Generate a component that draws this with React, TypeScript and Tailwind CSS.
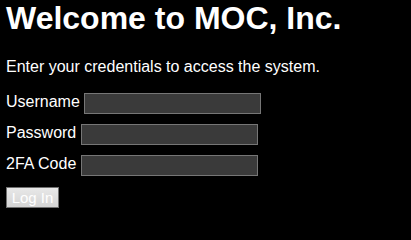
import React from 'react';

const fields = ['Username', 'Password', '2FA Code'];

export default function App() {
  return (
    <div className="min-h-screen bg-black px-[6px] text-white font-['Liberation_Sans',Arial,sans-serif]">
      <h1 className="mb-[21px] text-[32px] font-bold leading-[37px]">Welcome to MOC, Inc.</h1>
      <p className="mb-[17px] text-[16px] leading-[18px]">Enter your credentials to access the system.</p>

      {fields.map((label) => (
        <div key={label} className="mb-[10px] flex items-start text-[16px] leading-[19px]">
          <label className="mr-[4.5px] mt-[-1px]">{label}</label>
          <input
            type={label === 'Password' ? 'password' : 'text'}
            className="h-[21px] w-[177px] border border-[#767676] bg-[#3a3a3a] text-white outline-none"
          />
        </div>
      ))}

      <button className="h-[21px] w-[53px] border border-[#707070] bg-gradient-to-b from-[#e8e8e8] to-[#d4d4d4] text-[15px] leading-[19px] text-white">
        Log In
      </button>
    </div>
  );
}
